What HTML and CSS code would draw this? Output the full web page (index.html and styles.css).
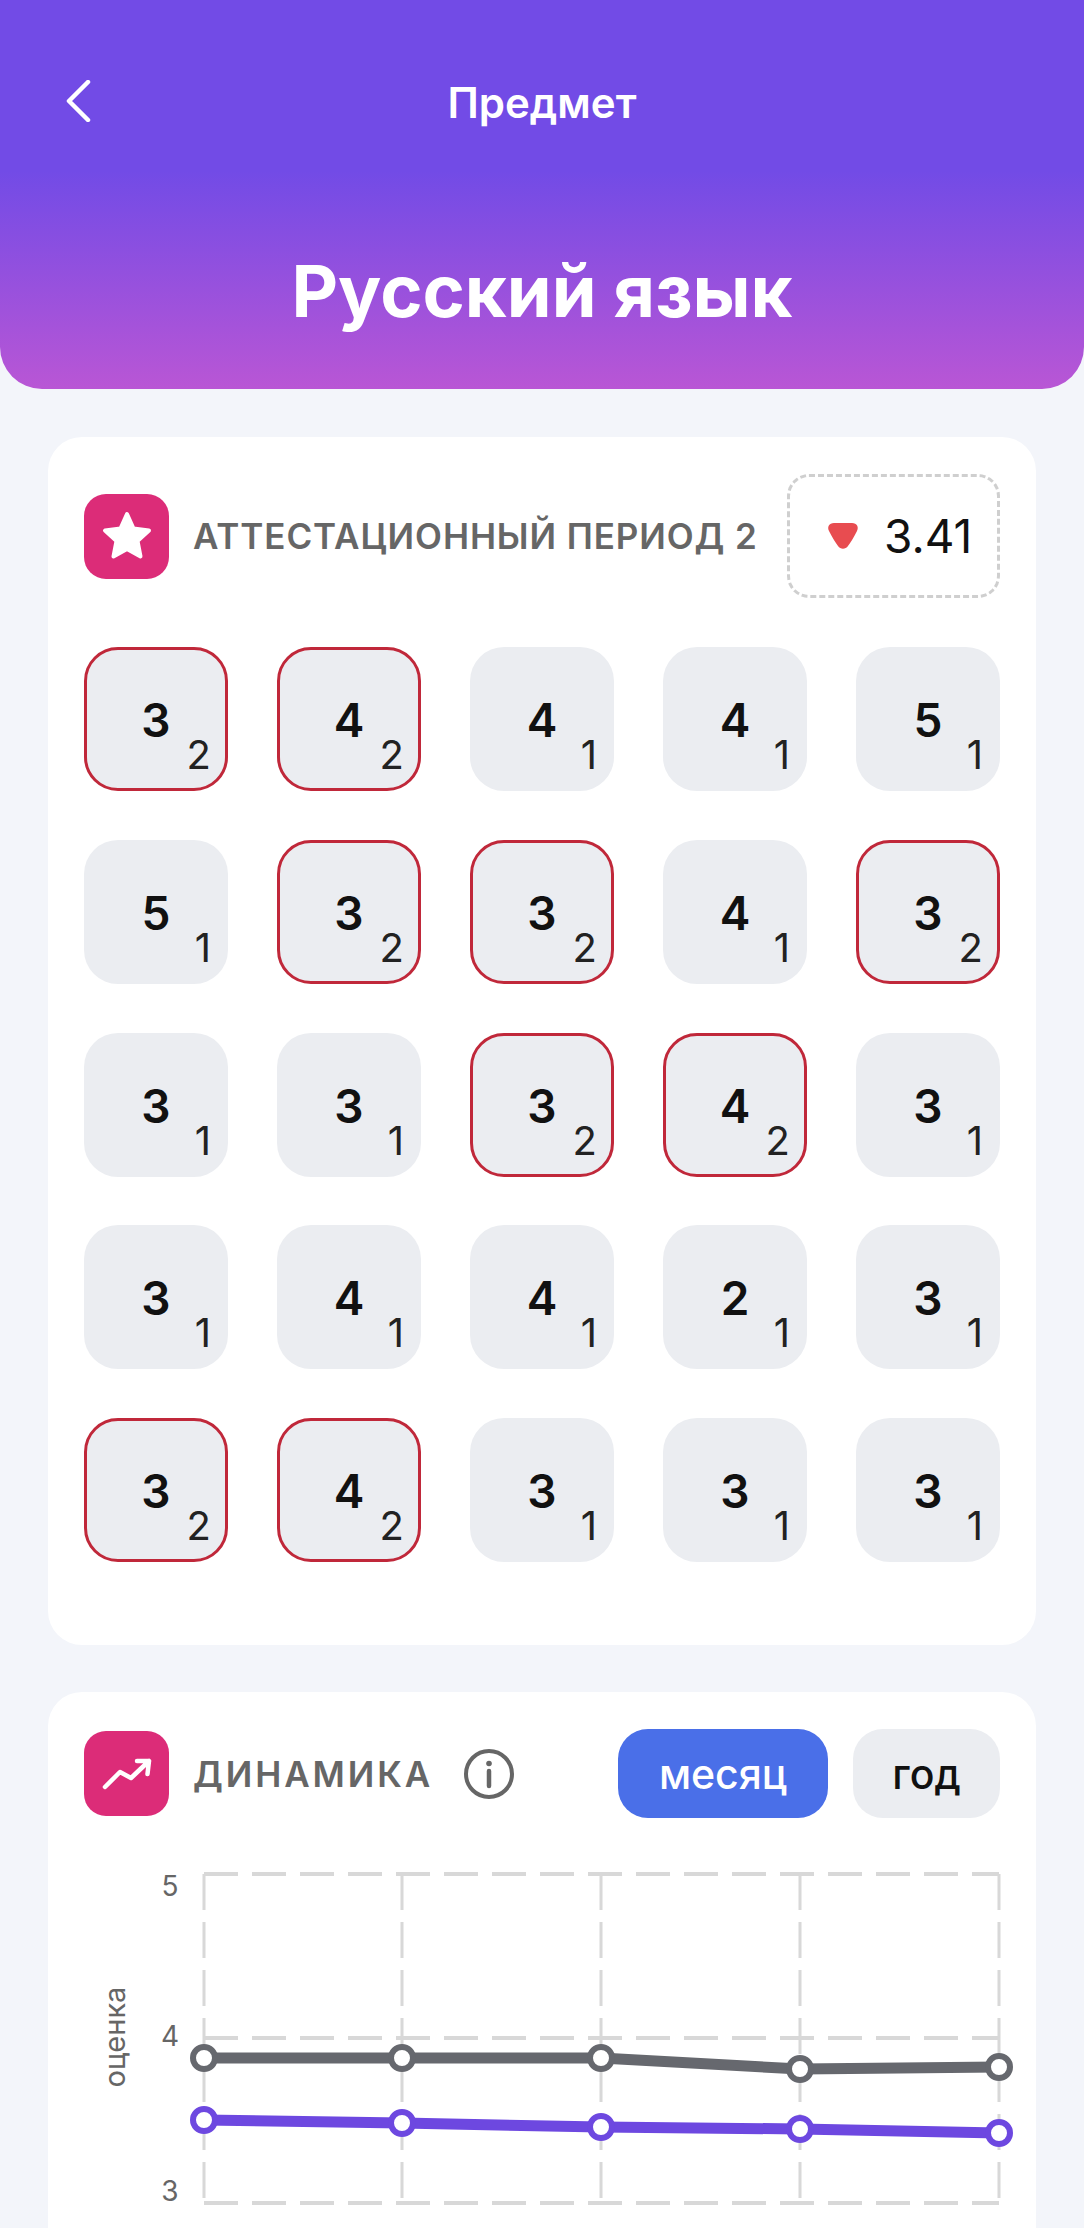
FILE: index.html
```html
<!DOCTYPE html>
<html lang="ru">
<head>
<meta charset="utf-8">
<title>Предмет</title>
<link rel="stylesheet" href="styles.css">
</head>
<body>
<div class="page">
  <header class="hero">
    <div class="nav">
      <svg class="back" width="26" height="42" viewBox="0 0 26 42"><path d="M23 2 L4 21 L23 40" fill="none" stroke="#fff" stroke-width="4.5" stroke-linecap="round" stroke-linejoin="round"/></svg>
      <div class="nav-title">Предмет</div>
    </div>
    <h1 class="subject">Русский язык</h1>
  </header>

  <section class="card card-grades">
    <div class="card-head">
      <div class="head-left">
        <div class="icon-tile">
          <svg width="56" height="56" viewBox="0 0 56 56"><path d="M28 6 L34.5 20.5 L50 22.5 L38.5 33 L41.5 48.5 L28 41 L14.5 48.5 L17.5 33 L6 22.5 L21.5 20.5 Z" fill="#fff" stroke="#fff" stroke-width="4" stroke-linejoin="round"/></svg>
        </div>
        <div class="period">АТТЕСТАЦИОННЫЙ ПЕРИОД 2</div>
      </div>
      <div class="avg">
        <svg width="32" height="28" viewBox="0 0 32 28"><path d="M7 1 H25 C30 1 32 5 30 9 C27 15 24 20 21 24 C18.500 27.500 13.500 27.500 11 24 C8 20 5 15 2 9 C0 5 2 1 7 1 Z" fill="#E84C50"/></svg>
        <span class="avg-num">3.41</span>
      </div>
    </div>
    <div class="grades">
      <div class="cell flag">3<span class="w">2</span></div>
      <div class="cell flag">4<span class="w">2</span></div>
      <div class="cell">4<span class="w">1</span></div>
      <div class="cell">4<span class="w">1</span></div>
      <div class="cell">5<span class="w">1</span></div>

      <div class="cell">5<span class="w">1</span></div>
      <div class="cell flag">3<span class="w">2</span></div>
      <div class="cell flag">3<span class="w">2</span></div>
      <div class="cell">4<span class="w">1</span></div>
      <div class="cell flag">3<span class="w">2</span></div>

      <div class="cell">3<span class="w">1</span></div>
      <div class="cell">3<span class="w">1</span></div>
      <div class="cell flag">3<span class="w">2</span></div>
      <div class="cell flag">4<span class="w">2</span></div>
      <div class="cell">3<span class="w">1</span></div>

      <div class="cell">3<span class="w">1</span></div>
      <div class="cell">4<span class="w">1</span></div>
      <div class="cell">4<span class="w">1</span></div>
      <div class="cell">2<span class="w">1</span></div>
      <div class="cell">3<span class="w">1</span></div>

      <div class="cell flag">3<span class="w">2</span></div>
      <div class="cell flag">4<span class="w">2</span></div>
      <div class="cell">3<span class="w">1</span></div>
      <div class="cell">3<span class="w">1</span></div>
      <div class="cell">3<span class="w">1</span></div>
    </div>
  </section>

  <section class="card card-dyn">
    <div class="card-head dyn-head">
      <div class="head-left">
        <div class="icon-tile">
          <svg width="56" height="56" viewBox="0 0 56 56"><path d="M10 46 L25 31 L36 37 L54 20 M42 20 H54 L52.5 33" transform="translate(-4 -5)" fill="none" stroke="#fff" stroke-width="4.5" stroke-linecap="round" stroke-linejoin="round"/></svg>
        </div>
        <div class="dyn-title">ДИНАМИКА</div>
        <svg class="info" width="52" height="52" viewBox="0 0 52 52"><circle cx="26" cy="26" r="23" fill="none" stroke="#666" stroke-width="4"/><circle cx="26" cy="15.500" r="2.800" fill="#666"/><path d="M26 23 V38" stroke="#666" stroke-width="4.500" stroke-linecap="round"/></svg>
      </div>
      <div class="tabs">
        <div class="tab tab-on">месяц</div>
        <div class="tab">год</div>
      </div>
    </div>
    <svg class="chart" width="988" height="400" viewBox="48 1860 988 400">
      <g class="grid">
        <path d="M204 1874 H999 M204 2038 H999 M204 2203 H999"/>
        <path d="M204 1874 V2203 M402 1874 V2203 M601 1874 V2203 M800 1874 V2203 M999 1874 V2203" class="grid-v"/>
      </g>
      <text class="tick" x="170" y="1896" text-anchor="middle">5</text>
      <text class="tick" x="170" y="2046" text-anchor="middle">4</text>
      <text class="tick" x="170" y="2201" text-anchor="middle">3</text>
      <text class="axis" transform="translate(125 2037) rotate(-90)" text-anchor="middle">оценка</text>
      <polyline class="line line-gray" points="204,2058 402,2058 601,2058 800,2069 999,2067"/>
      <polyline class="line line-purple" points="204,2120 402,2123 601,2127 800,2129 999,2133"/>
      <g class="dots dots-gray">
        <circle cx="204" cy="2058" r="11"/><circle cx="402" cy="2058" r="11"/><circle cx="601" cy="2058" r="11"/><circle cx="800" cy="2069" r="11"/><circle cx="999" cy="2067" r="11"/>
      </g>
      <g class="dots dots-purple">
        <circle cx="204" cy="2120" r="11"/><circle cx="402" cy="2123" r="11"/><circle cx="601" cy="2127" r="11"/><circle cx="800" cy="2129" r="11"/><circle cx="999" cy="2133" r="11"/>
      </g>
    </svg>
  </section>
</div>
</body>
</html>
```
FILE: styles.css
```css
* { box-sizing: border-box; }
html, body { margin: 0; padding: 0; }
body { background: #F3F5FA; font-family: Inter, "Liberation Sans", sans-serif; }
.page { height: 2228px; overflow: hidden; background: #F3F5FA; }

.hero {
  height: 389px;
  padding-top: 72px;
  background: linear-gradient(180deg, #724BE6 0%, #724BE6 44%, #B956D5 100%);
  border-radius: 0 0 42px 42px;
  color: #fff;
}
.nav { position: relative; height: 60px; display: flex; align-items: center; justify-content: center; }
.back { position: absolute; left: 65px; top: 8px; }
.nav-title { font-size: 42px; font-weight: 600; }
.subject {
  margin: 117px 0 0;
  text-align: center;
  font-size: 72px;
  line-height: 84px;
  font-weight: 700;
}

.card { margin: 48px 48px 0; background: #fff; border-radius: 34px; padding: 37px 36px 0; }
.card-grades { height: 1208px; }
.card-dyn { margin-top: 47px; height: 600px; padding-top: 37px; position: relative; }

.card-head { display: flex; align-items: center; justify-content: space-between; height: 124px; }
.head-left { display: flex; align-items: center; }
.icon-tile {
  width: 85px; height: 85px;
  border-radius: 22px;
  background: #DC2C78;
  display: flex; align-items: center; justify-content: center;
  flex: none;
}
.period { margin-left: 24px; font-size: 35px; letter-spacing: 0.9px; font-weight: 600; color: #666; white-space: nowrap; }

.avg {
  width: 213px; height: 124px;
  border: 3px dashed #CFCFCF;
  border-radius: 22px;
  display: flex; align-items: center;
  padding-left: 37px;
}
.avg-num { margin-left: 25px; font-size: 46px; color: #111; }

.grades {
  margin-top: 49px;
  display: grid;
  grid-template-columns: repeat(5, 144px);
  grid-auto-rows: 144px;
  column-gap: 49px;
  row-gap: 48.75px;
}
.cell {
  position: relative;
  background: #EBEDF1;
  border-radius: 34px;
  display: flex; align-items: center; justify-content: center;
  font-size: 46px; font-weight: 600; color: #111;
  padding-top: 2px;
}
.flag { border: 3px solid #C0283A; }
.w { position: absolute; right: 17px; bottom: 14px; font-size: 40px; font-weight: 400; color: #222; line-height: 44px; }
.flag .w { right: 14px; bottom: 11px; }

.dyn-head { height: 89px; margin-top: 0; }
.dyn-title { margin-left: 24px; font-size: 35px; font-weight: 600; color: #666; letter-spacing: 2.9px; }
.info { margin-left: 30px; }
.tabs { display: flex; gap: 25px; }
.tab {
  height: 89px; width: 147px;
  border-radius: 30px;
  background: #EBEDF1;
  display: flex; align-items: center; justify-content: center;
  font-size: 41px; font-weight: 500; color: #111;
}
.tab-on { width: 210px; background: #4A6FE8; color: #fff; }

.chart { display: block; margin: 42px 0 0 -36px; overflow: visible; }
.grid path { fill: none; stroke: #D8D8D8; stroke-width: 4; stroke-dasharray: 34 14; }
.grid .grid-v { stroke-width: 3; stroke-dasharray: 36 12; }
.tick { font-size: 28px; fill: #666; }
.axis { font-size: 29px; fill: #666; }
.line { fill: none; stroke-width: 11; stroke-linejoin: round; }
.line-gray { stroke: #66686E; }
.line-purple { stroke: #6D48E0; }
.dots circle { fill: #fff; stroke-width: 6; }
.dots-gray circle { stroke: #66686E; }
.dots-purple circle { stroke: #6D48E0; }
```
